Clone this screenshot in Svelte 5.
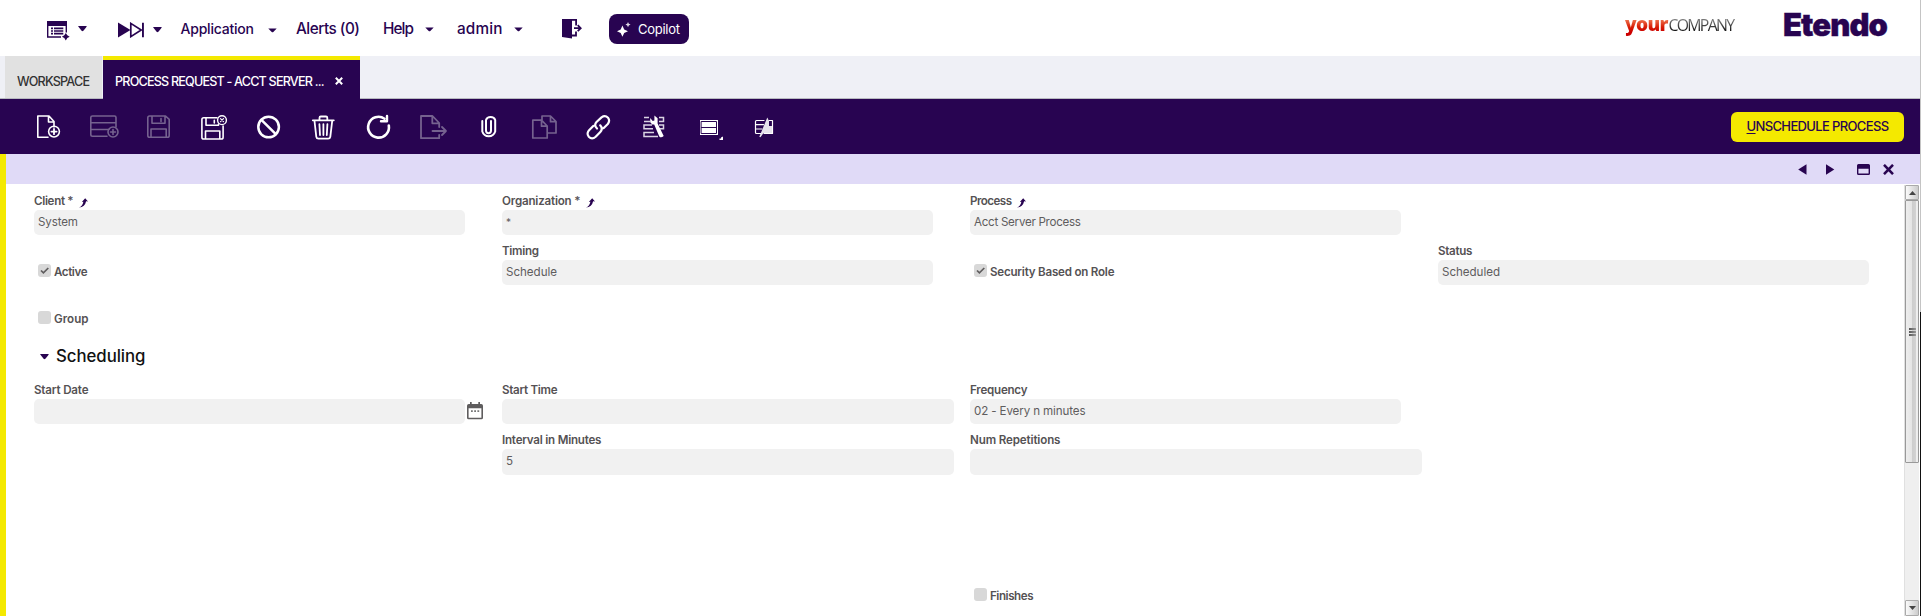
<script>
  // Spreads the glyphs of a label evenly over the given width in pixels.
  function fit(node, width) {
    node.style.display = 'inline-block';
    const natural = node.getBoundingClientRect().width;
    const count = node.textContent.length;
    if (count > 1) node.style.letterSpacing = `${(width - natural) / (count - 1)}px`;
    node.style.width = `${width}px`;
  }

  const general = [
    { type: 'text', label: 'Client *', lw: 39.5, value: 'System', vw: 40, link: true },
    { type: 'text', label: 'Organization *', lw: 78.5, value: '*', vw: 5, link: true },
    { type: 'text', label: 'Process', lw: 42, value: 'Acct Server Process', vw: 107, link: true },
    { type: 'empty' },
    { type: 'check', label: 'Active', lw: 33.5, checked: true },
    { type: 'text', label: 'Timing', lw: 37, value: 'Schedule', vw: 51 },
    { type: 'check', label: 'Security Based on Role', lw: 124.5, checked: true },
    { type: 'text', label: 'Status', lw: 34.5, value: 'Scheduled', vw: 58 }
  ];

  const scheduling = [
    { type: 'text', label: 'Start Date', lw: 54.5, value: '', calendar: true },
    { type: 'text', label: 'Start Time', lw: 55.5, value: '', wide: true },
    { type: 'text', label: 'Frequency', lw: 57.5, value: '02 - Every n minutes', vw: 111.5 },
    { type: 'empty' },
    { type: 'empty' },
    { type: 'text', label: 'Interval in Minutes', lw: 99.5, value: '5', vw: 6, wide: true, tall: true },
    { type: 'text', label: 'Num Repetitions', lw: 90.5, value: '', wide: true, tall: true },
    { type: 'empty' }
  ];
</script>

{#snippet caret()}
  <svg class="caret" width="9" height="6" viewBox="0 0 9 6"><path d="M.3.6Q0 0 .9 0H8.1Q9 0 8.6.7L5.4 4.7Q4.5 5.6 3.6 4.7Z" /></svg>
{/snippet}

{#snippet smallCaret()}
  <svg class="caret" width="9" height="5" viewBox="0 0 9 5"><path d="M.3.4H8.7L5.3 4Q4.5 4.7 3.7 4Z" /></svg>
{/snippet}

{#snippet checkbox(item)}
  <div class="check">
    <span class="box">
      {#if item.checked}
        <svg width="13" height="13" viewBox="0 0 13 13"><path d="M3 6.5 5.4 8.9 10.3 4" fill="none" stroke="#5f5d5e" stroke-width="1.7" /></svg>
      {/if}
    </span>
    <span class="label" use:fit={item.lw}>{item.label}</span>
  </div>
{/snippet}

{#snippet cell(item)}
  <div class="cell">
    {#if item.type === 'text'}
      <div class="label-row">
        <span class="label" use:fit={item.lw}>{item.label}</span>
        {#if item.link}
          <svg class="link" width="9" height="10" viewBox="0 0 9 10"><path d="M0 9.6Q3.4 8.5 4.4 3.8L2.8 4 6.2 .2 9 3.4 7.1 3.3Q6 9 0 9.6Z" fill="#280451" /></svg>
        {/if}
      </div>
      <div class="input-row">
        <div class="input" class:wide={item.wide} class:tall={item.tall}>
          {#if item.value}<span class:star={item.value === '*'} use:fit={item.vw}>{item.value}</span>{/if}
        </div>
        {#if item.calendar}
          <svg class="calendar" width="16" height="18" viewBox="0 0 16 18">
            <path d="M3 0H4.7V2H11.3V0H13V2H14.2Q16 2 16 3.8V15.8Q16 17.3 14.4 17.3H1.6Q0 17.3 0 15.8V3.8Q0 2 1.8 2H3ZM1.6 6.2V15.7H14.4V6.2Z" fill="#5f5d5e" />
            <path d="M4 8.2h1.8v1.7H4zM7.2 8.2H9v1.7H7.2zM10.4 8.2h1.8v1.7h-1.8z" fill="#777" />
          </svg>
        {/if}
      </div>
    {:else if item.type === 'check'}
      {@render checkbox(item)}
    {/if}
  </div>
{/snippet}

<div class="window">
  <div class="app">
    <header>
      <svg class="i-form" width="23" height="20" viewBox="0 0 23 20">
        <path d="M0 0H20V11.5H18.6V5H1.4V15.2H14V16.7H0Z" />
        <path d="M4 6.6h2v1.6H4zM7 6.6h9.3v1.6H7zM4 9.2h2v1.6H4zM7 9.2h9.3v1.6H7zM4 11.8h2v1.6H4zM7 11.8h9.3v1.6H7z" />
        <path d="M18.8 12 20.3 14.3 22.7 15.7 20.3 17.1 18.8 19.4 17.3 17.1 14.9 15.7 17.3 14.3Z" />
      </svg>
      <span class="c1">{@render caret()}</span>
      <svg class="i-fast" width="27" height="16" viewBox="0 0 27 16">
        <path d="M0 .5 12.5 8 0 15.5Z" />
        <path d="M12.8 1.4 23.2 8 12.8 14.6Z" fill="none" stroke="#280451" stroke-width="1.7" />
        <path d="M24 .8h1.9v14.4H24z" />
      </svg>
      <span class="c2">{@render caret()}</span>
      <span class="menu app-menu" use:fit={73.5}>Application</span>
      <span class="c3">{@render smallCaret()}</span>
      <span class="menu alerts" use:fit={64}>Alerts (0)</span>
      <span class="menu help" use:fit={31}>Help</span>
      <span class="c4">{@render smallCaret()}</span>
      <span class="menu admin" use:fit={45.5}>admin</span>
      <span class="c4">{@render smallCaret()}</span>
      <svg class="i-exit" width="20" height="20" viewBox="0 0 20 20">
        <path d="M0 0H15V6.5H13.2V1.7H10V19.5L0 18Z" />
        <path d="M10 16.5H14V12.5M12 9.2H18M15.7 6.2 18.7 9.2 15.7 12.2" fill="none" stroke="#280451" stroke-width="1.8" />
      </svg>
      <div class="copilot">
        <svg width="14" height="15" viewBox="0 0 14 15">
          <path d="M5.4 3.5 7.2 7.5 11 9.2 7.2 11 5.4 14.8 3.7 11 0 9.2 3.7 7.5Z" fill="#fff" />
          <path d="M11 0 11.8 1.8 13.6 2.6 11.8 3.4 11 5.2 10.2 3.4 8.4 2.6 10.2 1.8Z" fill="#fff" opacity=".85" />
        </svg>
        <span use:fit={42}>Copilot</span>
      </div>
      <div class="company"><b use:fit={43.5}>your</b><span use:fit={66.5}>COMPANY</span></div>
      <div class="brand"><span use:fit={105}>Etendo</span></div>
    </header>

    <nav>
      <div class="tab"><span use:fit={73}>WORKSPACE</span></div>
      <div class="tab active">
        <span use:fit={209.5}>PROCESS REQUEST - ACCT SERVER ...</span>
        <svg width="8" height="8" viewBox="0 0 8 8"><path d="M.8.8 7.2 7.2M7.2.8.8 7.2" stroke="#fff" stroke-width="2" /></svg>
      </div>
    </nav>

    <div class="toolbar">
      <svg viewBox="0 0 55 55"><path d="M27 38.3H16.8V17H28L33 22.5V28M27.5 17V23H33" /><circle cx="33" cy="32.6" r="5.4" /><path d="M33 30v5.2M30.4 32.6h5.2" stroke-width="1.8" /></svg>
      <svg class="off" viewBox="0 0 55 55"><path d="M31 37.2H16.5Q14.8 37.2 14.8 35.5V18.6Q14.8 17 16.5 17H38.5Q40 17 40 18.6V28M15 23.8H40M15 30.5H33" /><circle cx="37" cy="33" r="5" /><path d="M37 30.5v5M34.5 33h5" /></svg>
      <svg class="off" viewBox="0 0 55 55"><path d="M18.6 17H34.5L38.2 20.4V36.5Q38.2 38.3 36.4 38.3H18.6Q16.8 38.3 16.8 36.5V18.8Q16.8 17 18.6 17ZM21 17V24.3H34V17M30 19.5V22.5M20 38V30H35.2V38" /></svg>
      <svg viewBox="0 0 55 55"><path d="M31 18.8H17.7Q15.9 18.8 15.9 20.6V38.2Q15.9 40 17.7 40H35.3Q37.1 40 37.1 38.2V27M20 19V26.2H32.5V25M28.3 21.4V24M19.5 40V32H33.8V40" /><circle cx="36" cy="21.2" r="4.4" stroke-width="1.4" /><path d="M34.5 19.7l3 3M37.5 19.7l-3 3" stroke-width="1.2" /></svg>
      <svg viewBox="0 0 55 55"><circle cx="27.6" cy="28" r="10.3" stroke-width="2.5" /><path d="M20.4 20.8 34.8 35.2" stroke-width="2.5" /></svg>
      <svg viewBox="0 0 55 55"><path d="M16.8 21.3H37.8M23.5 21V18.8Q23.5 17.5 24.8 17.5H30Q31.3 17.5 31.3 18.8V21M18.5 22 20.3 37.8Q20.6 39.6 22.5 39.6H32.1Q34 39.6 34.3 37.8L36.2 22M23.4 25.2 24 36M27.4 25.2V36M31.4 25.2 30.8 36" stroke-width="1.8" /></svg>
      <svg viewBox="0 0 55 55"><path d="M37.8 26.5A10.4 10.4 0 1 1 33.5 19.7" stroke-width="2.6" /><path d="M36 17V22.2H30" stroke-width="2.4" /></svg>
      <svg class="off" viewBox="0 0 55 55"><path d="M33.2 36V39.2H15V17H26.5L33.2 24V28M26.3 17V24.3H33.2M26.5 32H40M36 28 40 32 36 36" stroke-width="1.8" /></svg>
      <svg viewBox="0 0 55 55"><path d="M21.3 22V32.5A6.8 7 0 0 0 34.2 32.5V21A4.8 4.2 0 0 0 25 21V31.5A2.5 2.7 0 0 0 30 31.5V22" stroke-width="2" /></svg>
      <svg class="off" viewBox="0 0 55 55"><path d="M26 21.2V17H34.5L40 22.5V34H32M34.5 17V22.7H40M16.8 21.2H25.5L31.2 27V39H16.8ZM25.5 21.5V27.2H31" stroke-width="1.7" /></svg>
      <svg viewBox="0 0 55 55"><path d="M26 29.5Q22.5 26.2 25.5 23L30.5 18.4Q34 15.8 37 18.7 39.3 21.8 36.8 25L32.5 29.2M29.2 26.3Q32.3 29.8 29.3 33L24.7 37.7Q21 41 17.8 37.7 15 34.5 18.3 31L22.5 26.8" stroke-width="2.2" /></svg>
      <svg viewBox="0 0 55 55"><path d="M23 18.5H18M18 22.5H24M33 18.5H37.5V22.5H33M26 26H18V29.8H27M33 26H37.5V29.8H34M28 33.4H18V37.5H32" stroke="#d9d3e3" stroke-width="1.5" stroke-linecap="butt" stroke-linejoin="miter" /><path d="M24.2 19V23.2L26.3 25.4H28.2L33.3 37.4Q35 39.3 37.7 37L31.6 24.4V19.2L28.4 16.4V21.4L26.7 22.1Z" fill="#fff" stroke="none" /></svg>
      <svg viewBox="0 0 55 55"><path d="M19 21H37V36H19Z" fill="#fff" stroke="none" /><path d="M20.5 22.5H35.5V34.5H20.5Z" stroke="#280451" stroke-width="1" stroke-linejoin="miter" /><path d="M20.5 28.5H35.5" stroke="#280451" stroke-width="1" /><path d="M42 37.5V41H38.5V39.5H40V38.5Z" fill="#fff" stroke="none" /></svg>
      <svg viewBox="0 0 55 55"><path d="M28 21.5H20.5Q19.5 21.5 19.5 22.5V33.5Q19.5 34.5 20.5 34.5H25M20 25.7H27.5M20 30H26M33 21.5H36.5V34.5H28" stroke-width="1.2" /><path d="M31.3 18.5 33 22V27H36V34H27.5L24.5 38.3 23.3 37.8Z" fill="#e6e2ec" stroke="none" /></svg>
      <button><span use:fit={142.5}><u>U</u>NSCHEDULE PROCESS</span></button>
    </div>

    <main>
      <div class="status">
        <svg width="9" height="11" viewBox="0 0 9 11"><path d="M8.5 .3V10.7L.2 5.5Z" /></svg>
        <svg class="next" width="9" height="11" viewBox="0 0 9 11"><path d="M0 .3V10.7L8.3 5.5Z" /></svg>
        <svg class="restore" width="13" height="11" viewBox="0 0 13 11"><path d="M1.5 0H11.5Q13 0 13 1.5V9.5Q13 11 11.5 11H1.5Q0 11 0 9.5V1.5Q0 0 1.5 0ZM1.4 4.8V9.5H11.6V4.8Z" /></svg>
        <svg class="close" width="11" height="11" viewBox="0 0 11 11"><path d="M1 .8 10 10.2M10 .8 1 10.2" stroke="#280451" stroke-width="2.5" /></svg>
      </div>
      <div class="body">
        <div class="form">
          <div class="grid">
            {#each general as item}{@render cell(item)}{/each}
          </div>
          <div class="group">{@render checkbox({ label: 'Group', lw: 34.5 })}</div>
          <div class="section">{@render caret()}<span use:fit={89.5}>Scheduling</span></div>
          <div class="grid">
            {#each scheduling as item}{@render cell(item)}{/each}
          </div>
          <div class="finishes">{@render checkbox({ label: 'Finishes', lw: 43.5 })}</div>
        </div>
        <div class="scroll">
          <div class="sbtn"><svg width="7" height="4" viewBox="0 0 7 4"><path d="M3.5 0 7 4H0Z" fill="#444" /></svg></div>
          <div class="thumb"><i></i><i></i><i></i></div>
          <div class="sbtn down"><svg width="7" height="4" viewBox="0 0 7 4"><path d="M3.5 4 7 0H0Z" fill="#444" /></svg></div>
        </div>
      </div>
    </main>
  </div>
  <div class="edge"></div>
</div>

<style>
  :global(body) { margin: 0; overflow: hidden; }
  .window { display: flex; width: 1921px; height: 616px; overflow: hidden; background: #fff; font-family: Inter, sans-serif; color: #280451; white-space: nowrap; }
  .window * { box-sizing: border-box; }
  svg { display: block; flex: none; fill: #280451; }
  .app { width: 1920px; height: 616px; display: flex; flex-direction: column; }
  .edge { width: 1px; background: linear-gradient(#c4c4c4 312px, #111 312px); }

  header { height: 56px; flex: none; display: flex; align-items: flex-start; padding-left: 47px; }
  .menu { font-size: 15.3px; font-weight: 500; line-height: 20px; margin-top: 19px; flex: none; }
  .i-form { margin-top: 21px; }
  .c1 { margin: 26px 0 0 8px; }
  .i-fast { margin: 22px 0 0 31px; }
  .c2 { margin: 27px 0 0 8px; }
  .menu.app-menu { font-size: 14px; margin-left: 18.5px; }
  .c3 { margin: 28px 0 0 13.5px; }
  .alerts { margin-left: 19.5px; }
  .help { margin-left: 23px; }
  .c4 { margin: 27px 0 0 11px; }
  .admin { margin-left: 23px; }
  .i-exit { margin: 19px 0 0 39.5px; }
  .copilot { width: 80px; height: 30px; margin: 14px 0 0 27px; padding-left: 8px; border-radius: 8px; background: #280451; color: #fff; display: flex; align-items: center; gap: 7px; font-size: 13px; flex: none; }
  .company { display: flex; align-items: baseline; margin: 11px 0 0 auto; font: 15.8px/26px "Open Sans", sans-serif; }
  .company b { font-size: 19px; color: transparent; background: linear-gradient(#f07a55 8px, #d81e05 16px, #c00 21px); -webkit-background-clip: text; background-clip: text; font-weight: 800; }
  .company span { color: transparent; background: linear-gradient(#777 8px, #111 19px); -webkit-background-clip: text; background-clip: text; font-weight: 400; }
  .brand { margin: 6px 32px 0 48px; font-size: 31px; line-height: 38px; font-weight: 900; -webkit-text-stroke: .4px #280451; }

  nav { height: 43px; flex: none; background: #eff0f6; border-bottom: 1px solid #b8bac0; display: flex; padding-left: 5px; gap: 1px; }
  .tab { width: 97px; height: 42px; background: #e1e1e1; color: #333; padding: 9px 0 0 12px; display: flex; align-items: center; font-size: 12.6px; font-weight: 500; }
  .tab.active { width: 257px; height: 43px; background: #280451; color: #fff; border-top: 4px solid #f4e900; padding-top: 4px; }
  .tab svg { margin: -1px 0 0 10.5px; }

  .toolbar { height: 55px; flex: none; background: #280451; display: flex; align-items: center; padding-left: 21px; }
  .toolbar svg { width: 55px; height: 55px; fill: none; stroke: #fff; stroke-width: 1.6; stroke-linejoin: round; stroke-linecap: round; }
  .toolbar svg.off { stroke: #75628f; }
  .toolbar button { width: 173px; height: 30px; margin: 1px 16px 0 auto; padding: 0 0 2px; border: 0; border-radius: 6px; background: #f4e900; color: #280451; font: 500 13px Inter, sans-serif; white-space: nowrap; }
  u { text-underline-offset: 2px; }

  main { flex: 1; min-height: 0; border-left: 6px solid #f4e900; display: flex; flex-direction: column; }
  .status { height: 30px; flex: none; background: #e0daf7; display: flex; justify-content: flex-end; align-items: center; padding-right: 26px; }
  .next { margin-left: 19px; }
  .restore { margin-left: 22px; }
  .close { margin-left: 13px; }
  .body { display: flex; flex: 1; min-height: 0; }
  .form { flex: 1; min-width: 0; padding: 1px 0 0 28px; font-size: 11.6px; color: #5f5d5e; }
  .grid { display: grid; grid-template-columns: repeat(4, 468px); width: 1870px; grid-auto-rows: minmax(50px, auto); }
  .cell { padding-top: 5px; }
  .label { font-weight: 600; color: #555254; }
  .label-row { display: flex; height: 20px; line-height: 23px; }
  .link { margin: 8px 0 0 5px; }
  .input-row { display: flex; }
  .input { width: 431px; height: 25px; line-height: 25px; padding-left: 4px; border-radius: 5px; background: #f1f1f1; }
  .input.wide { width: 452px; }
  .input.tall { height: 26px; }
  .star { line-height: 25px; font-size: 10px; }
  .calendar { margin: 3px 0 0 2px; }
  .check { display: flex; padding-left: 4px; line-height: 16px; }
  .cell .check { padding-top: 24px; }
  .box { width: 13px; height: 13px; border-radius: 3px; background: #d8d8d8; margin-right: 3px; }
  .group { height: 48px; padding-top: 26px; }
  .section { height: 41px; display: flex; align-items: flex-start; padding: 14px 0 0 5.5px; font-size: 16.8px; line-height: 22px; font-weight: 500; color: #111; }
  .section span { margin: -2px 0 0 7.5px; }
  .section :global(.caret) { margin-top: 7px; }
  .finishes { margin-left: 936px; padding-top: 113px; }

  .scroll { width: 15px; margin: 1px 1px 0 0; background: #efefef; border-left: 1px solid #e0e0e0; display: flex; flex-direction: column; }
  .sbtn { width: 14px; height: 15px; flex: none; border: 1px solid #aaa; border-radius: 1px; background: linear-gradient(90deg, #fafafa, #ccc); display: grid; place-items: center; }
  .sbtn.down { margin-top: auto; height: 16px; }
  .thumb { width: 14px; height: 263px; border: 1px solid #999; border-radius: 1px; background: linear-gradient(90deg, #eee, #e4e4e4 50%, #cdcdcd 52%, #d2d2d2 80%, #eee 85%); display: flex; flex-direction: column; gap: 1px; align-items: center; justify-content: center; }
  .thumb i { width: 7px; height: 2px; background: linear-gradient(90deg, #555, #999); }
</style>
